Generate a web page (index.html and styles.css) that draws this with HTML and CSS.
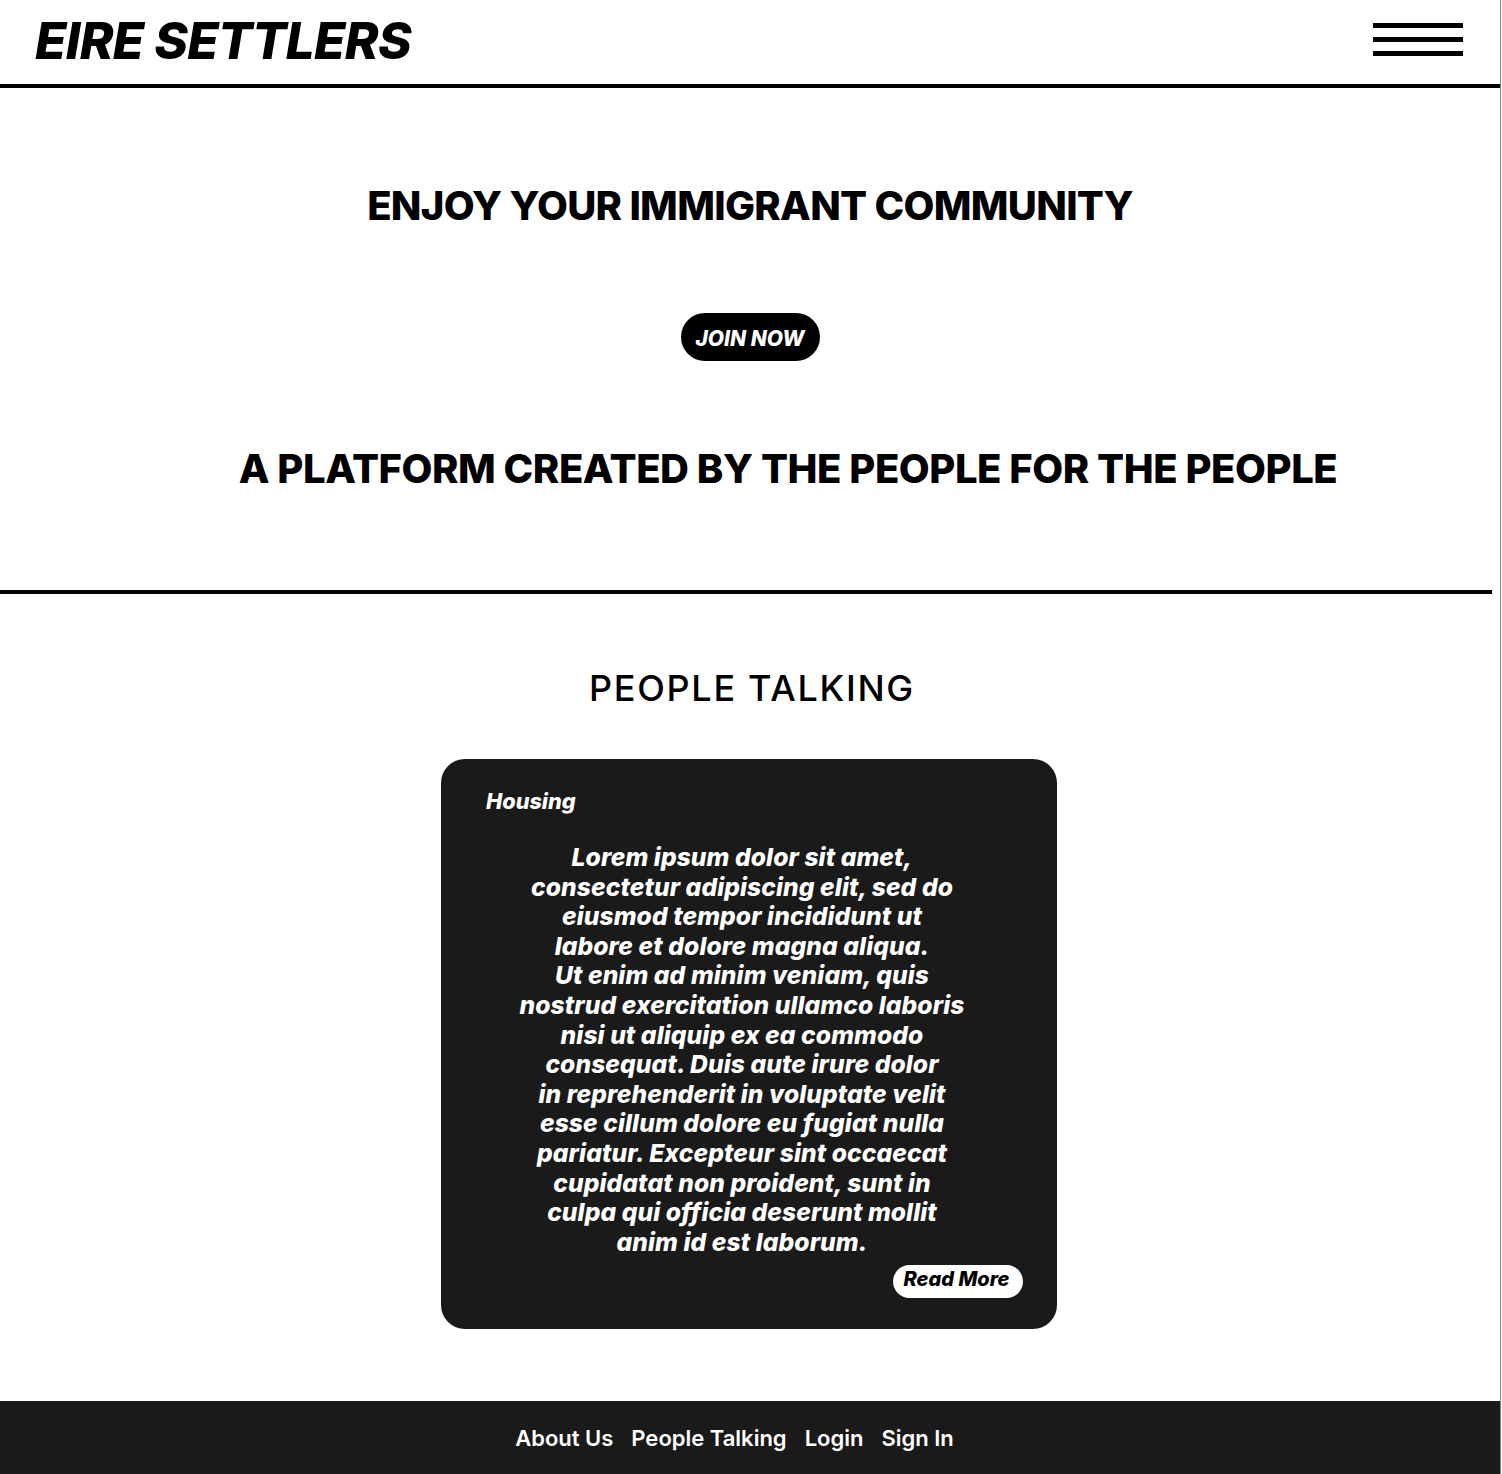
FILE: index.html
```html
<!DOCTYPE html>
<html lang="en">
<head>
<meta charset="utf-8">
<title>Eire Settlers</title>
<link rel="stylesheet" href="styles.css">
</head>
<body>
<div class="page">
  <header class="topbar">
    <div class="logo">EIRE SETTLERS</div>
    <button class="burger" aria-label="Menu">
      <span></span><span></span><span></span>
    </button>
  </header>

  <section class="hero">
    <h1 class="hero-title">ENJOY YOUR IMMIGRANT COMMUNITY</h1>
    <a class="join-btn" href="#">JOIN NOW</a>
    <h2 class="hero-sub">A PLATFORM CREATED BY THE PEOPLE FOR THE PEOPLE</h2>
  </section>

  <div class="divider"></div>

  <section class="talking">
    <h2 class="talking-title">PEOPLE TALKING</h2>
    <article class="card">
      <div class="card-tag">Housing</div>
      <p class="card-text">Lorem ipsum dolor sit amet,<br>consectetur adipiscing elit, sed do<br>eiusmod tempor incididunt ut<br>labore et dolore magna aliqua.<br>Ut enim ad minim veniam, quis<br>nostrud exercitation ullamco laboris<br>nisi ut aliquip ex ea commodo<br>consequat. Duis aute irure dolor<br>in reprehenderit in voluptate velit<br>esse cillum dolore eu fugiat nulla<br>pariatur. Excepteur sint occaecat<br>cupidatat non proident, sunt in<br>culpa qui officia deserunt mollit<br>anim id est laborum.</p>
      <div class="card-actions"><a class="read-btn" href="#">Read More</a></div>
    </article>
  </section>

  <footer class="footer">
    <nav class="footer-nav">
      <a href="#">About Us</a>
      <a href="#">People Talking</a>
      <a href="#">Login</a>
      <a href="#">Sign In</a>
    </nav>
  </footer>
</div>
</body>
</html>
```

FILE: styles.css
```css
* { box-sizing: border-box; }
html, body { margin: 0; padding: 0; background: #fff; }
body { font-family: Inter, "Noto Sans", sans-serif; color: #000; }

.page {
  width: 1501px;
  border-right: 1px solid #808080;
  display: flex;
  flex-direction: column;
}

.topbar {
  height: 88px;
  border-bottom: 4px solid #000;
  display: flex;
  justify-content: space-between;
  align-items: center;
  padding: 0 37px 4px 35px;
}
.logo {
  font-size: 51px;
  font-weight: 800;
  font-style: italic;
  line-height: 1;
  letter-spacing: -0.65px;
}
.burger {
  width: 90px;
  height: 33px;
  padding: 0;
  border: 0;
  background: none;
  display: flex;
  flex-direction: column;
  justify-content: space-between;
  margin-top: -2px;
}
.burger span {
  display: block;
  height: 5px;
  background: #000;
}

.hero {
  display: flex;
  flex-direction: column;
  align-items: center;
  padding-top: 96px;
}
.hero-title, .hero-sub {
  margin: 0;
  font-size: 40px;
  line-height: 44px;
  font-weight: 800;
}
.hero-title { letter-spacing: -0.7px; }
.join-btn {
  margin-top: 85px;
  height: 48px;
  width: 139px;
  border-radius: 24px;
  background: #000;
  color: #fff;
  text-decoration: none;
  font-size: 21px;
  font-weight: 800;
  font-style: italic;
  display: flex;
  align-items: center;
  justify-content: center;
  padding-top: 2px;
}
.hero-sub {
  margin-top: 86px;
  padding-left: 76px;
  letter-spacing: -0.45px;
}

.divider {
  margin-top: 99px;
  width: 1492px;
  height: 4px;
  background: #000;
}

.talking {
  display: flex;
  flex-direction: column;
  align-items: center;
  padding-top: 76px;
}
.talking-title {
  margin: 0 0 0 4px;
  font-size: 36px;
  line-height: 36px;
  font-weight: 500;
  letter-spacing: 1.7px;
}
.card {
  margin: 53px 2px 0 0;
  width: 616px;
  background: #1a1a1a;
  border-radius: 24px;
  color: #fff;
  padding: 32px 34px 31px 45px;
  display: flex;
  flex-direction: column;
}
.card-tag {
  font-size: 21.7px;
  line-height: 21px;
  font-weight: 800;
  font-style: italic;
}
.card-text {
  margin: 31px 25px 0 0;
  font-size: 24.6px;
  line-height: 29.6px;
  font-weight: 800;
  font-style: italic;
  text-align: center;
  letter-spacing: 0.1px;
}
.card-actions {
  margin-top: 8px;
  display: flex;
  justify-content: flex-end;
}
.read-btn {
  width: 130px;
  height: 33px;
  border-radius: 17px;
  background: #fff;
  color: #000;
  text-decoration: none;
  font-size: 20px;
  font-weight: 800;
  font-style: italic;
  display: flex;
  align-items: center;
  justify-content: center;
  padding-bottom: 5px;
  padding-right: 3px;
}

.footer {
  margin-top: 72px;
  height: 73px;
  background: #1a1a1a;
  display: flex;
  align-items: center;
  justify-content: center;
  padding-right: 31px;
}
.footer-nav {
  display: flex;
  gap: 18px;
}
.footer-nav a {
  color: #fff;
  text-decoration: none;
  font-size: 22px;
  font-weight: 600;
}
```
